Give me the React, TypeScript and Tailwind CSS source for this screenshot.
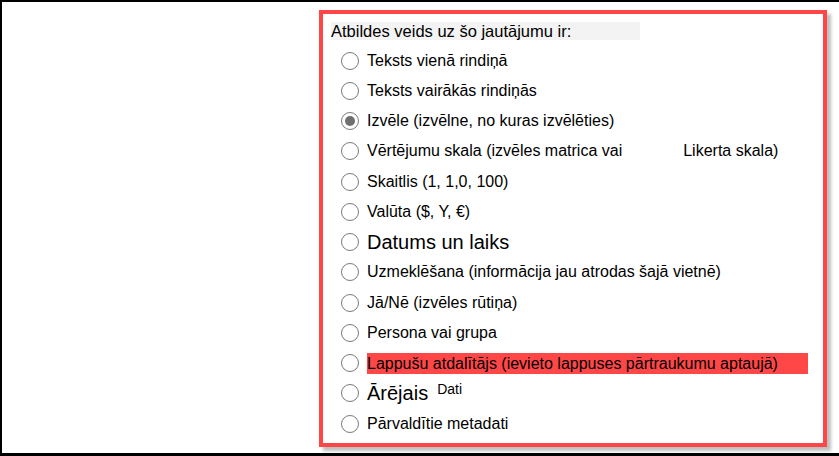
import React from "react"

type Option = {
  label: React.ReactNode
  checked?: boolean
}

const Radio: React.FC<{ checked?: boolean }> = ({ checked }) => (
  <span className="flex h-[18px] w-[18px] shrink-0 items-center justify-center rounded-full border-[1.5px] border-[#7a7a7a] bg-white">
    {checked && <span className="h-[10px] w-[10px] rounded-full bg-[#6f6f6f]" />}
  </span>
)

const options: Option[] = [
  { label: "Teksts vienā rindiņā" },
  { label: "Teksts vairākās rindiņās" },
  { label: "Izvēle (izvēlne, no kuras izvēlēties)", checked: true },
  {
    label: (
      <span className="flex">
        <span>Vērtējumu skala (izvēles matrica vai</span>
        <span className="ml-[61px]">Likerta skala)</span>
      </span>
    ),
  },
  { label: "Skaitlis (1, 1,0, 100)" },
  { label: "Valūta ($, Y, €)" },
  { label: <span className="text-[20px]">Datums un laiks</span> },
  { label: "Uzmeklēšana (informācija jau atrodas šajā vietnē)" },
  { label: "Jā/Nē (izvēles rūtiņa)" },
  { label: "Persona vai grupa" },
  {
    label: (
      <span className="block w-[441px] bg-[#ff4747] leading-[21px]">
        Lappušu atdalītājs (ievieto lappuses pārtraukumu aptaujā)
      </span>
    ),
  },
  {
    label: (
      <span className="flex items-start">
        <span className="text-[20px] leading-[22px]">Ārējais</span>
        <span className="ml-[9px] text-[14px] leading-[14px]">Dati</span>
      </span>
    ),
  },
  { label: "Pārvaldītie metadati" },
]

const App: React.FC = () => {
  return (
    <div className="h-[456px] w-[839px] border-t-2 border-b-[3px] border-l-2 border-black bg-white font-['Liberation_Sans',Arial,sans-serif] text-black">
      <div className="ml-[317px] mt-[8px] h-[437px] w-[508px] border-4 border-[#ff4646] bg-white px-[8px] pt-[8px] shadow-[4px_4px_3px_rgba(0,0,0,0.25)]">
        <div className="h-[18px] w-[309px] bg-[#f3f3f3] text-[16.5px] leading-[18px]">
          Atbildes veids uz šo jautājumu ir:
        </div>
        <div className="mt-[5px] flex flex-col pl-[10px]">
          {options.map((o, i) => (
            <div key={i} className="flex h-[30.25px] items-center gap-[8px] pt-[1px] text-[16px]">
              <Radio checked={o.checked} />
              {o.label}
            </div>
          ))}
        </div>
      </div>
    </div>
  )
}

export default App
